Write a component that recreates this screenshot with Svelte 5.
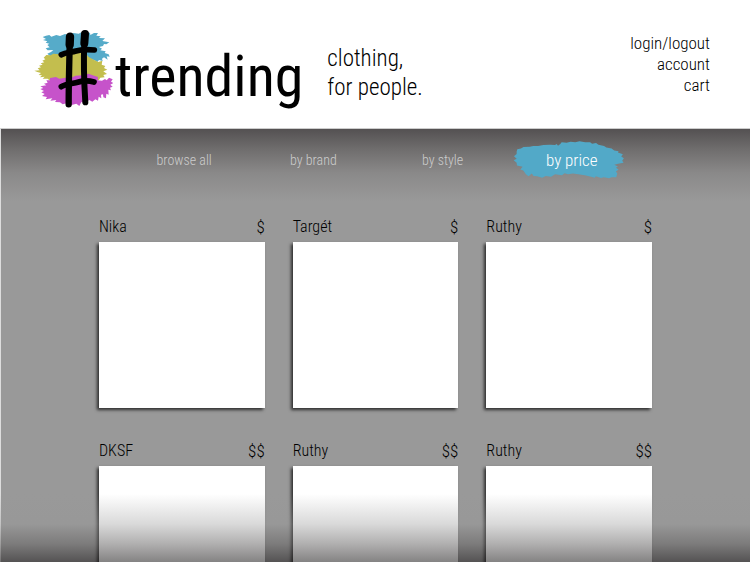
<script>
  const account = ['login/logout', 'account', 'cart'];
  const filters = ['browse all', 'by brand', 'by style', 'by price'];
  const products = [
    { name: 'Nika', price: '$' },
    { name: 'Targét', price: '$' },
    { name: 'Ruthy', price: '$' },
    { name: 'DKSF', price: '$$' },
    { name: 'Ruthy', price: '$$' },
    { name: 'Ruthy', price: '$$' }
  ];
  let active = $state('by price');
</script>

<div class="page">
  <header>
    <a class="brand" href="#home" aria-label="#trending">
      <svg class="mark" viewBox="0 0 255 270" aria-hidden="true">
        <path fill="#56abc9" d="M48 47 58 45 64 50 79 45 90 48 105 42 118 46 130 39 146 41 157 35 165 38 180 38 181 45 192 39 204 39 199 47 212 49 207 54 225 55 217 63 238 67 229 73 222 72 219 78 207 81 216 86 211 91 227 94 224 99 236 103 239 110 230 109 233 119 222 112 216 116 218 123 207 120 202 126 192 120 180 118 170 106 60 108 52 101 63 96 70 90 53 91 47 85 59 82 52 75 58 71 47 68 52 64 39 60 48 57 38 51Z"/>
        <path fill="#c3be4e" d="M49 105 62 106 70 101 88 103 99 99 120 100 135 95 151 98 167 100 176 111 191 119 205 126 217 122 215 134 226 138 222 144 232 149 220 154 231 162 220 165 224 172 211 173 207 180 60 182 53 176 38 176 44 170 30 172 36 166 26 165 33 159 22 156 13 152 29 151 23 145 33 142 27 137 38 134 32 130 43 127 37 122 46 118 41 113Z"/>
        <path fill="#c653ca" d="M60 174 78 171 88 176 106 173 116 176 137 167 158 166 176 161 188 166 204 171 203 181 216 182 225 177 230 181 237 173 248 178 243 185 250 189 241 194 248 200 240 203 243 211 235 209 236 224 229 221 228 235 220 232 219 223 213 224 214 235 206 230 204 242 196 238 187 245 178 240 164 249 154 246 148 258 139 251 125 255 113 249 98 253 90 247 75 246 79 240 61 242 67 235 47 238 51 231 36 228 44 222 34 217 42 213 31 207 40 204 31 199 49 196 42 191 53 188 49 181 60 181Z"/>
        <g fill="none" stroke="#000" stroke-linecap="round" stroke-linejoin="round">
          <path stroke-width="25" d="M120 50 119 75"/>
          <path stroke-width="19" d="M119 75C118 130 116 180 116 253"/>
          <path stroke-width="24" d="M165 42 163 70"/>
          <path stroke-width="18" d="M163 70C160 130 162 185 166 247"/>
          <path stroke-width="17" d="M94 104C108 96 123 98 138 93S174 88 193 90"/>
          <path stroke-width="17" d="M94 200C110 190 128 192 146 186S178 182 192 186"/>
        </g>
      </svg>
      <span class="word">trending</span>
    </a>
    <p class="tagline">clothing,<br />for people.</p>
    <ul class="account">
      {#each account as item}
        <li><a href="#{item}">{item}</a></li>
      {/each}
    </ul>
  </header>

  <main>
    <nav aria-label="Filters">
      {#each filters as item}
        <button class:active={active === item} onclick={() => (active = item)}>
          {#if active === item}
            <svg viewBox="0 0 336 112" preserveAspectRatio="none" aria-hidden="true">
              <path fill="#52a9c8" d="M13 24 24 22 32 18 51 17 61 15 76 15 92 12 112 11 127 12 132 9 136 14 143 9 147 4 162 5 174 2 188 4 201 1 218 4 233 4 239 8 251 6 258 11 275 15 282 19 298 22 306 28 319 30 317 34 332 39 327 46 335 51 330 58 334 64 318 67 306 70 317 75 311 79 319 84 311 90 315 96 312 107 298 107 290 110 274 107 266 109 250 104 247 108 236 105 217 101 197 98 181 96 166 98 156 95 148 101 127 98 115 105 99 103 88 108 73 104 62 103 57 96 47 104 39 98 31 87 22 84 29 76 12 72 11 64 2 57 11 52 3 45 11 38 11 31Z"/>
            </svg>
          {/if}
          <span>{item}</span>
        </button>
      {/each}
    </nav>

    <section class="grid">
      {#each products as product}
        <article>
          <div class="label">
            <h2>{product.name}</h2>
            <span>{product.price}</span>
          </div>
          <div class="photo"></div>
        </article>
      {/each}
    </section>
  </main>
  <div class="fade"></div>
</div>

<style>
  :global(body) {
    margin: 0;
  }
  .page {
    height: 100vh;
    overflow: hidden;
    position: relative;
    display: flex;
    flex-direction: column;
    background: #fff;
    color: #000;
    font-family: 'Roboto Condensed', Roboto, sans-serif;
    font-weight: 300;
  }
  a {
    color: inherit;
    text-decoration: none;
  }
  header {
    flex: none;
    display: flex;
    align-items: flex-start;
    padding: 20px 40px 18px 30px;
  }
  .brand {
    display: flex;
    align-items: flex-start;
  }
  .mark {
    width: 85px;
    height: 90px;
  }
  .word {
    font-size: 58px;
    font-weight: 400;
    line-height: 72px;
    padding-top: 20px;
    height: 70px;
  }
  .tagline {
    margin: 24px 0 0 24px;
    font-size: 23px;
    line-height: 29px;
  }
  .account {
    list-style: none;
    margin: 13px 0 0 auto;
    padding: 0;
    text-align: right;
    font-size: 17px;
    line-height: 21px;
  }
  main {
    flex: 1;
    min-height: 0;
    border-top: 1px solid #ccc;
    border-left: 1px solid #ddd;
    background: linear-gradient(#545152, #6f6d6d 20px, #8a8989 44px, #999 72px) #999;
  }
  nav {
    display: grid;
    grid-template-columns: repeat(4, 1fr);
    width: 69%;
    margin: 0 auto;
    padding: 12px 0 0 5px;
  }
  button {
    position: relative;
    height: 38px;
    padding: 0;
    border: 0;
    background: none;
    font: inherit;
    font-size: 14px;
    color: #ccc;
    cursor: pointer;
  }
  button svg {
    position: absolute;
    inset: 0 6px;
    width: calc(100% - 18px);
    height: 100%;
  }
  button span {
    position: relative;
  }
  .active {
    font-size: 17px;
    color: #fff;
  }
  .grid {
    display: grid;
    grid-template-columns: repeat(3, 1fr);
    gap: 33px 28px;
    max-width: 553px;
    margin: 38px auto 0;
  }
  .label {
    display: flex;
    justify-content: space-between;
    font-size: 16px;
    line-height: 20px;
    padding-bottom: 5px;
  }
  .label span {
    font-size: 17px;
  }
  h2 {
    margin: 0;
    font: inherit;
  }
  .photo {
    aspect-ratio: 1;
    background: #fff;
    box-shadow: -2px 2px 3px rgba(0, 0, 0, 0.7);
  }
  .fade {
    position: absolute;
    inset: auto 0 0 0;
    height: 68px;
    pointer-events: none;
    background: linear-gradient(
      rgba(153, 153, 153, 0),
      rgba(150, 150, 150, 0.36) 30px,
      rgba(94, 92, 92, 0.49) 50px,
      rgba(23, 20, 21, 0.53)
    );
  }
</style>
